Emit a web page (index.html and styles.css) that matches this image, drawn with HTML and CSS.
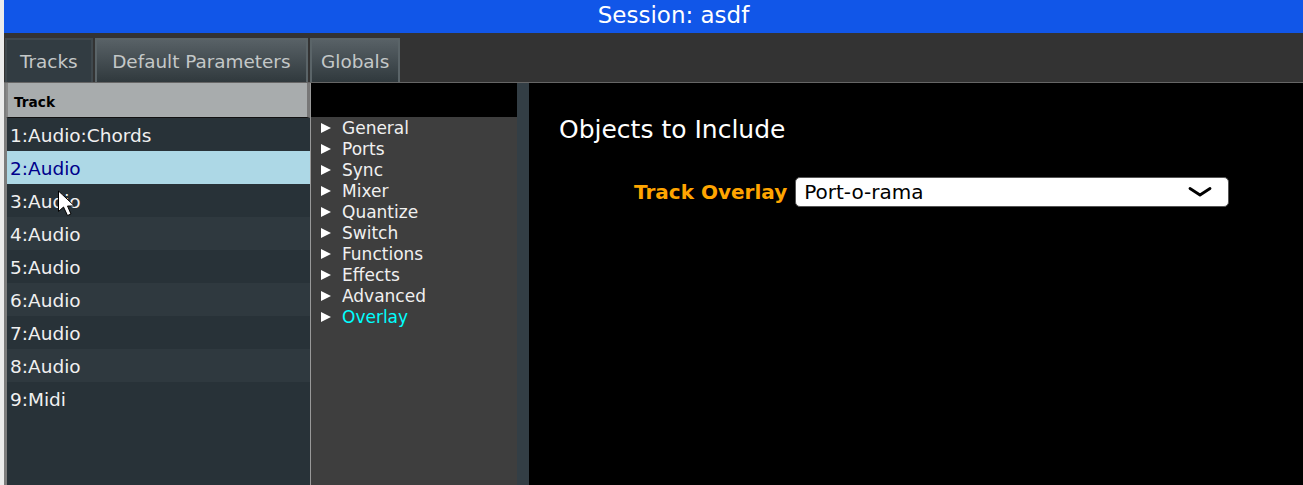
FILE: index.html
```html
<!DOCTYPE html>
<html lang="en">
<head>
    <meta charset="UTF-8">
    <title>Session: asdf</title>
    <link rel="stylesheet" href="styles.css">
</head>
<body>
    <div class="app">
        <div class="title-bar">Session: asdf</div>

        <div class="tab-bar">
            <div class="tab tab-active">Tracks</div>
            <div class="tab tab-wide">Default Parameters</div>
            <div class="tab">Globals</div>
        </div>

        <div class="main">
            <div class="track-table">
                <div class="track-header"><span>Track</span></div>
                <div class="track-row">1:Audio:Chords</div>
                <div class="track-row track-selected">2:Audio</div>
                <div class="track-row">3:Audio</div>
                <div class="track-row track-alt">4:Audio</div>
                <div class="track-row">5:Audio</div>
                <div class="track-row track-alt">6:Audio</div>
                <div class="track-row">7:Audio</div>
                <div class="track-row track-alt">8:Audio</div>
                <div class="track-row">9:Midi</div>
                <svg class="cursor" width="20" height="28" viewBox="0 0 20 28">
                    <path d="M1.5 1V21.5L6.5 17L10.5 25.5L14 24L10.5 16H17.5Z" fill="#fff" stroke="#000" stroke-width="1"/>
                </svg>
            </div>

            <div class="tree-panel">
                <div class="tree-header"></div>
                <ul class="tree">
                    <li><span class="arrow"></span>General</li>
                    <li><span class="arrow"></span>Ports</li>
                    <li><span class="arrow"></span>Sync</li>
                    <li><span class="arrow"></span>Mixer</li>
                    <li><span class="arrow"></span>Quantize</li>
                    <li><span class="arrow"></span>Switch</li>
                    <li><span class="arrow"></span>Functions</li>
                    <li><span class="arrow"></span>Effects</li>
                    <li><span class="arrow"></span>Advanced</li>
                    <li class="tree-current"><span class="arrow"></span>Overlay</li>
                </ul>
            </div>

            <div class="divider"></div>

            <div class="form-panel">
                <h2>Objects to Include</h2>
                <div class="field">
                    <label>Track Overlay</label>
                    <div class="combo">
                        <span>Port-o-rama</span>
                        <svg width="24" height="10" viewBox="0 0 24 10">
                            <path d="M2 1.5L12 8L22 1.5" fill="none" stroke="#000" stroke-width="2.8" stroke-linecap="round" stroke-linejoin="round"/>
                        </svg>
                    </div>
                </div>
            </div>
        </div>
    </div>
</body>
</html>
```

FILE: styles.css
```css
html, body {
    margin: 0;
    height: 100%;
    background-color: #ececec;
    overflow: hidden;
}

.app {
    display: flex;
    flex-direction: column;
    height: 485px;
    margin-left: 4px;
    background-color: #333;
    font-family: "DejaVu Sans", sans-serif;
}

.title-bar {
    height: 33px;
    padding-left: 40px;
    line-height: 31px;
    text-align: center;
    font-size: 23px;
    color: #fff;
    background-color: #1156e8;
}

.tab-bar {
    display: flex;
    gap: 2px;
    height: 50px;
    padding: 5px 0 0 1px;
    box-sizing: border-box;
    border-bottom: 1px solid #666;
}

.tab {
    padding: 0 9px;
    line-height: 44px;
    font-size: 18.4px;
    color: #c4c8c8;
    border: 2px solid #5a6468;
    border-bottom: 0;
    background: linear-gradient(#586166, #30393d);
}

.tab-wide {
    padding: 0 15.5px;
}

.tab-active {
    padding: 0 13px;
    background: #323c42;
    border-color: #3f484d;
}

.main {
    flex: 1;
    display: flex;
    min-height: 0;
}

.track-table {
    position: relative;
    width: 303px;
    background-color: #283238;
    border-left: 3px solid #7d7d7d;
    border-right: 1px solid #999;
    color: #f0f0f0;
    font-size: 18.5px;
}

.track-header {
    height: 35px;
    margin-left: -1px;
    padding-left: 6px;
    box-sizing: border-box;
    line-height: 38px;
    font-size: 13.7px;
    font-weight: bold;
    color: #000;
    background-color: #a8acad;
    border-bottom: 1px solid #111;
    border-left: 2px solid #888;
    border-right: 3px solid #777;
}

.track-row {
    height: 33px;
    line-height: 35px;
    padding-left: 3px;
}

.track-alt {
    background-color: #2f393f;
}

.track-selected {
    background-color: #add8e6;
    color: #00008b;
}

.cursor {
    position: absolute;
    left: 50px;
    top: 107px;
}

.tree-panel {
    width: 206px;
    background-color: #3e3e3e;
    color: #f0f0f0;
    font-size: 17px;
}

.tree-header {
    height: 34px;
    background-color: #000;
}

.tree {
    list-style: none;
    margin: 0;
    padding: 0 0 0 10px;
}

.tree li {
    display: flex;
    align-items: center;
    height: 21px;
}

.arrow {
    width: 0;
    height: 0;
    margin-right: 11px;
    border-left: 10px solid #fff;
    border-top: 5px solid transparent;
    border-bottom: 5px solid transparent;
}

.tree-current {
    color: #0ff;
}

.divider {
    width: 12px;
    background-color: #333e45;
}

.form-panel {
    flex: 1;
    padding-left: 30px;
    background-color: #000;
    color: #fff;
}

.form-panel h2 {
    margin: 32px 0 0;
    font-size: 25px;
    font-weight: normal;
    line-height: 30px;
}

.field {
    display: flex;
    align-items: center;
    gap: 8px;
    margin: 32px 0 0 75px;
}

.field label {
    font-size: 20px;
    font-weight: bold;
    color: #ffa500;
}

.combo {
    display: flex;
    align-items: center;
    justify-content: space-between;
    width: 434px;
    height: 30px;
    box-sizing: border-box;
    padding: 0 16px 0 8px;
    font-size: 20px;
    color: #000;
    background-color: #fff;
    border: 1px solid #555;
    border-radius: 5px;
}
```
